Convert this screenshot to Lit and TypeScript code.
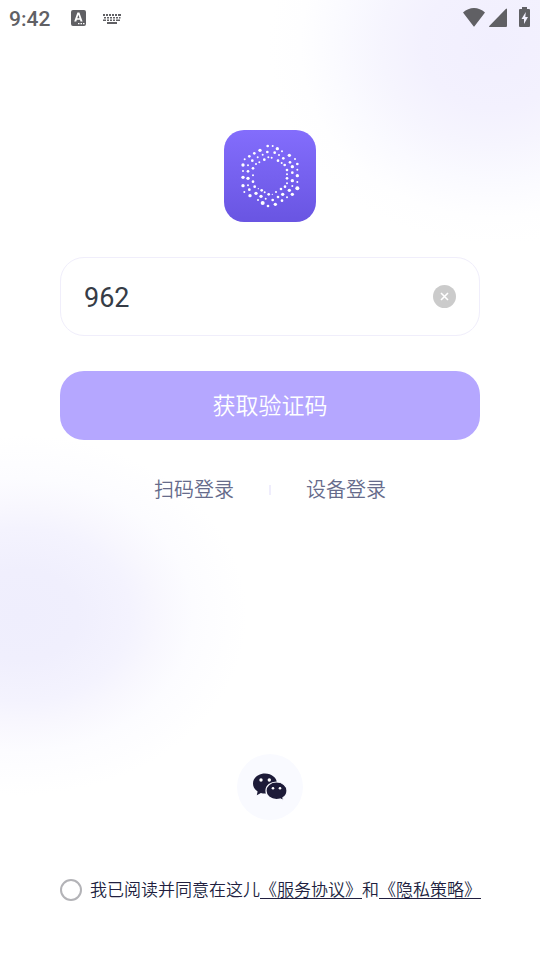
import { LitElement, html, svg, css } from "lit";
import { customElement, state } from "lit/decorators.js";

// Dots of the hexagonal mark: centre x, centre y, radius.
const LOGO_DOTS: number[][] = [
  [143, 60, 4], [158, 60, 3], [172, 68, 5], [186, 76, 3], [120, 73, 5], [103, 82, 4],
  [88, 91, 4], [74, 100, 3], [142, 78, 4], [164, 80, 4], [128, 86, 3], [113, 94, 3],
  [97, 104, 4], [177, 87, 3], [190, 97, 4], [208, 88, 5], [225, 99, 3], [232, 114, 4],
  [210, 109, 4], [84, 118, 3], [69, 117, 5], [69, 135, 3], [69, 154, 5], [69, 179, 5],
  [73, 198, 3], [90, 209, 5], [88, 191, 4], [84, 178, 3], [84, 157, 5],
  [84, 136, 4], [99, 127, 4], [99, 148, 3], [99, 167, 4], [108, 114, 3], [118, 109, 3],
  [133, 101, 4], [145, 94, 3], [155, 95, 3], [174, 104, 4], [185, 111, 3], [194, 117, 4],
  [201, 132, 4], [201, 145, 3], [201, 157, 4], [201, 172, 3], [195, 182, 4], [183, 189, 4],
  [168, 198, 3], [157, 205, 2], [146, 205, 4], [134, 199, 3], [125, 193, 4], [115, 188, 2],
  [104, 182, 4], [217, 122, 5], [217, 140, 4], [217, 164, 5], [217, 180, 3], [232, 131, 3],
  [232, 149, 5], [232, 168, 3], [232, 187, 6], [217, 205, 5], [201, 214, 3], [186, 224, 4],
  [166, 235, 5], [144, 240, 4], [128, 231, 6], [114, 222, 3], [108, 202, 5], [123, 211, 5],
  [137, 218, 3], [158, 222, 4], [174, 213, 4], [188, 205, 5], [208, 193, 5],
];

@customElement("status-bar")
class StatusBar extends LitElement {
  static styles = css`
    :host {
      display: flex;
      align-items: center;
      height: 36px;
      padding: 0 10px 0 9px;
      color: #606064;
      font: 500 21px/36px Roboto, sans-serif;
    }
    svg { display: block; fill: currentColor; }
    .left, .right { display: flex; align-items: center; }
    .left { gap: 16px; }
    .time { margin-right: 5px; padding-top: 2px; }
    .right { margin: 0 0 2px auto; }
    .signal { margin: 0 12px 0 4px; }
  `;

  render() {
    return html`
      <div class="left">
        <span class="time">9:42</span>
        <svg width="15" height="16" viewBox="0 0 15 16" aria-hidden="true">
          <path fill-rule="evenodd" d="M2 0H13Q15 0 15 2V14Q15 16 13 16H2Q0 16 0 14V2Q0 0 2 0ZM6.400 2.500L3.200 11.500H5.300L5.800 9.800H9L9.500 11.500H11.600L8.400 2.500ZM6.300 8.200L7.400 4.800L8.500 8.200ZM7 13V14.300H8.500V13ZM9.500 13V14.300H11V13ZM12 13V14.300H13.500V13Z" />
        </svg>
        <svg width="20" height="11" viewBox="0 0 20 11" aria-hidden="true">
          <path d="M1 1h2v2H1zM4 1h2v2H4zM7 1h2v2H7zM10 1h2v2h-2zM13 1h2v2h-2zM16 1h3v2h-3zM2 4h2v1.500H2zM5 4h2v1.500H5zM8 4h2v1.500H8zM11 4h2v1.500h-2zM14 4h2v1.500h-2zM17 4h1.500v1.500H17zM1 6.500h3V8H1zM5 6.500h2V8H5zM8 6.500h2V8H8zM11 6.500h2V8h-2zM14 6.500h4V8h-4zM5 9h10v2H5z" />
        </svg>
      </div>
      <div class="right">
        <svg width="22" height="19" viewBox="0 0 22 19" aria-hidden="true">
          <path d="M0 4.500Q5 0 11 0T22 4.500L11.700 18Q11 19 10.300 18Z" />
        </svg>
        <svg class="signal" width="18" height="19" viewBox="0 0 18 19" aria-hidden="true">
          <path d="M18 1V18Q18 19 17 19H0.500Q-0.300 18.600 0.300 18L16.800 1Q17.600 0.200 18 1Z" />
        </svg>
        <svg width="11" height="20" viewBox="0 0 11 20" aria-hidden="true">
          <path fill-rule="evenodd" d="M3 0H8V2H10Q11 2 11 3V19Q11 20 10 20H1Q0 20 0 19V3Q0 2 1 2H3ZM6.800 5L2.500 12H5V17L9 10H6.300Z" />
        </svg>
      </div>
    `;
  }
}

@customElement("app-logo")
class AppLogo extends LitElement {
  static styles = css`
    :host { display: block; }
    svg {
      display: block;
      width: 92px;
      height: 92px;
      border-radius: 20px;
      background: linear-gradient(#836dfc, #6955e2);
      fill: #fff;
    }
  `;

  render() {
    return html`<svg viewBox="12 12 276 276" role="img" aria-label="logo">
      ${LOGO_DOTS.map(([x, y, r]) => svg`<circle cx=${x} cy=${y} r=${r} />`)}
    </svg>`;
  }
}

@customElement("app-root")
class AppRoot extends LitElement {
  @state() private phone = "962";
  @state() private agreed = false;

  static styles = css`
    :host {
      display: flex;
      flex-direction: column;
      box-sizing: border-box;
      min-height: 100vh;
      font-family: Roboto, "Noto Sans CJK SC", sans-serif;
      background:
        radial-gradient(ellipse 225px 200px at calc(100% - 46px) 45px, #f1effe 0, #f3f1fe 32%, #f6f5fe 50%, #fafaff 68%, #fefeff 86%, transparent 100%),
        radial-gradient(ellipse 225px 180px at 22px 615px, #efeefd 0, #f0effd 25%, #f4f3fe 48%, #f8f7fe 60%, #fcfcff 76%, transparent 100%),
        #fff;
    }
    * { box-sizing: border-box; }
    button, input { font-family: inherit; margin: 0; }
    button { border: 0; padding: 0; cursor: pointer; }
    svg { display: block; }
    main {
      flex: 1;
      display: flex;
      flex-direction: column;
      align-items: center;
      padding: 94px 60px 58px;
    }
    form {
      align-self: stretch;
      display: flex;
      flex-direction: column;
      gap: 35px;
      margin-top: 35px;
    }
    .field {
      display: flex;
      align-items: center;
      height: 79px;
      padding: 0 23px;
      border: 1px solid #f0eefb;
      border-radius: 24px;
      background: #fff;
    }
    .field input {
      flex: 1;
      min-width: 0;
      padding: 2px 0 0;
      border: 0;
      outline: 0;
      background: none;
      color: #363c46;
      font-size: 27px;
      line-height: 36px;
    }
    .clear {
      width: 23px;
      height: 23px;
      border-radius: 50%;
      background: #cbcbcb;
    }
    .submit {
      height: 69px;
      padding-top: 2px;
      border-radius: 24px;
      background: #b5a7ff;
      color: #fff;
      font-size: 23px;
      font-weight: 350;
      line-height: 34px;
    }
    .others {
      display: flex;
      align-items: center;
      gap: 35px;
      margin-top: 35px;
    }
    .others a {
      color: #666b8b;
      font-size: 20px;
      font-weight: 350;
      line-height: 30px;
      text-decoration: none;
    }
    .divider { width: 2px; height: 10px; background: #efedfc; }
    .wechat {
      display: grid;
      place-items: center;
      width: 66px;
      height: 66px;
      margin-top: auto;
      border-radius: 50%;
      background: #f9faff;
    }
    .agreement {
      display: flex;
      align-items: center;
      align-self: stretch;
      justify-content: center;
      gap: 8px;
      margin: 58px -1px 0 0;
      color: #211f3f;
      font-size: 17px;
      font-weight: 350;
      line-height: 24px;
    }
    .agreement label { white-space: nowrap; }
    .agreement input {
      flex: none;
      appearance: none;
      width: 22px;
      height: 22px;
      border: 2px solid #b3b3b7;
      border-radius: 50%;
    }
    .agreement input:checked { border: 6px solid #7662ef; }
    .agreement a {
      color: inherit;
      text-decoration: underline 1px;
      text-underline-offset: 2px;
      text-decoration-skip-ink: none;
    }
  `;

  private onInput(e: Event) {
    this.phone = (e.target as HTMLInputElement).value;
  }

  render() {
    return html`
      <status-bar></status-bar>
      <main>
        <app-logo></app-logo>
        <form @submit=${(e: Event) => e.preventDefault()}>
          <div class="field">
            <input type="tel" aria-label="手机号" .value=${this.phone} @input=${this.onInput} />
            <button class="clear" type="button" aria-label="清除" @click=${() => (this.phone = "")}>
              <svg width="23" height="23" viewBox="0 0 23 23" aria-hidden="true">
                <path d="M8 8L15 15M15 8L8 15" stroke="#fff" stroke-width="1.600" />
              </svg>
            </button>
          </div>
          <button class="submit" type="submit">获取验证码</button>
        </form>
        <nav class="others">
          <a href="#scan">扫码登录</a>
          <span class="divider"></span>
          <a href="#device">设备登录</a>
        </nav>
        <button class="wechat" type="button" aria-label="微信登录">
          <svg width="34" height="28" viewBox="0 0 34 28" aria-hidden="true">
            <path fill="#1d1b38" d="M12 0.500C5.300 0.500 0 4.900 0 10.500C0 13.800 1.800 16.600 4.600 18.500L3.800 22.300L7.900 20C9.200 20.400 10.600 20.600 12 20.600C18.700 20.600 24 16.100 24 10.500S18.700 0.500 12 0.500Z" />
            <path fill="#1d1b38" stroke="#f9faff" stroke-width="1.200" d="M23.500 9C17.500 9 13 12.800 13 17.700S17.500 26.500 23.500 26.500C24.800 26.500 26 26.300 27.100 26L30.500 27.600L29.900 24.800C32.400 23.100 34 20.700 34 17.700C34 12.800 29.500 9 23.500 9Z" />
            <circle cx="8" cy="7" r="1.700" fill="#fff" /><circle cx="16.300" cy="7" r="1.700" fill="#fff" />
            <circle cx="20" cy="15.200" r="1.300" fill="#fff" /><circle cx="27" cy="15.200" r="1.300" fill="#fff" />
          </svg>
        </button>
        <div class="agreement">
          <input id="agree" type="checkbox" .checked=${this.agreed}
            @change=${(e: Event) => (this.agreed = (e.target as HTMLInputElement).checked)} />
          <label for="agree">我已阅读并同意在这儿<a href="#terms">《服务协议》</a>和<a href="#privacy">《隐私策略》</a></label>
        </div>
      </main>
    `;
  }
}
